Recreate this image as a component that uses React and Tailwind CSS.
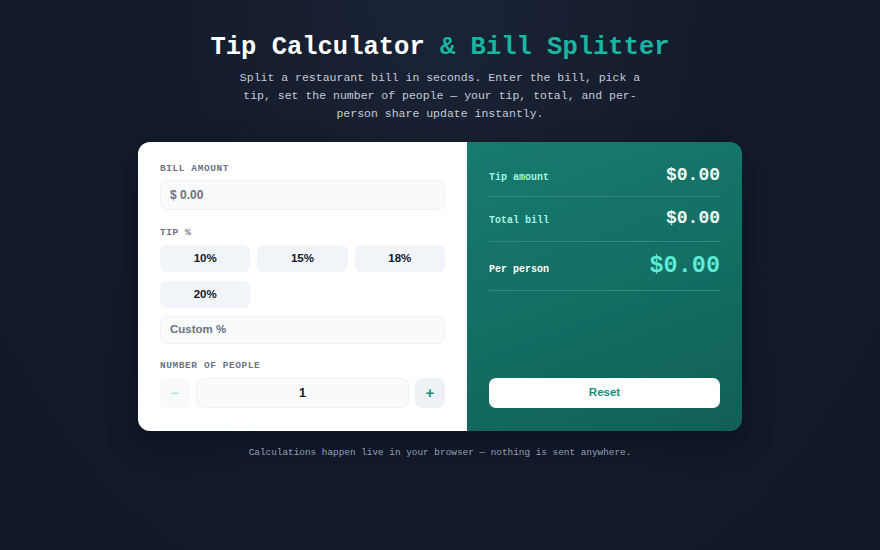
import React from "react";

export default function App() {
  return (
    <div
      className="min-h-[550px] w-full flex flex-col items-center bg-[radial-gradient(ellipse_at_top,_#1b2436_0%,_#131b2c_45%,_#0f1729_100%)] font-['Liberation_Mono',monospace]"
    >
      <h1 className="mt-[33px] text-[25.5px] leading-[30px] font-bold text-white tracking-[0px]">
        Tip Calculator <span className="text-[#19b5a0]">&amp; Bill Splitter</span>
      </h1>
      <p className="mt-[6px] max-w-[410px] text-center text-[11.5px] leading-[18px] text-[#c3cad6]">
        Split a restaurant bill in seconds. Enter the bill, pick a tip, set the number of people — your tip, total, and per-person share update instantly.
      </p>

      <div className="mt-[19px] w-[604px] h-[289px] grid grid-cols-[329px_1fr] rounded-[12px] overflow-hidden shadow-[0_10px_30px_rgba(0,0,0,0.35)]">
        {/* Left */}
        <div className="bg-white px-[22px] pt-[21px] font-['Liberation_Sans',Arial,sans-serif]">
          <div className="text-[9.5px] leading-[12px] font-bold tracking-[0.06em] text-[#6b7385] font-['Liberation_Mono',monospace]">BILL AMOUNT</div>
          <div className="mt-[5px] h-[30px] rounded-[8px] border border-[#eef1f5] bg-[#f8fafc] flex items-center px-[9px] text-[12px] font-bold text-[#6b7280]">
            $ 0.00
          </div>
          <div className="mt-[17px] text-[9.5px] leading-[12px] font-bold tracking-[0.06em] text-[#6b7385] font-['Liberation_Mono',monospace]">TIP %</div>
          <div className="mt-[6px] grid grid-cols-3 gap-x-[7px] gap-y-[9px]">
            {["10%", "15%", "18%", "20%"].map((t) => (
              <div key={t} className="h-[27px] rounded-[7px] bg-[#f1f4f8] flex items-center justify-center text-[11.5px] font-bold text-[#111827]">
                {t}
              </div>
            ))}
          </div>
          <div className="mt-[8px] h-[28px] rounded-[8px] border border-[#eef1f5] bg-[#f8fafc] flex items-center px-[9px] text-[11.5px] font-bold text-[#6b7280]">
            Custom %
          </div>
          <div className="mt-[16px] text-[9.5px] leading-[12px] font-bold tracking-[0.06em] text-[#6b7385] font-['Liberation_Mono',monospace]">NUMBER OF PEOPLE</div>
          <div className="mt-[6px] flex gap-[6px] h-[30px]">
            <div className="w-[30px] rounded-[7px] bg-[#f8fafc] flex items-center justify-center text-[15px] text-[#9ad9cc]">−</div>
            <div className="flex-1 rounded-[8px] border border-[#eef1f5] bg-[#f8fafc] flex items-center justify-center text-[12.5px] font-bold text-[#111827]">1</div>
            <div className="w-[30px] rounded-[7px] bg-[#eef2f6] flex items-center justify-center text-[15px] font-bold text-[#0f8f7d]">+</div>
          </div>
        </div>

        {/* Right */}
        <div className="bg-[linear-gradient(160deg,_#177b6f_0%,_#136d63_55%,_#115f57_100%)] px-[22px] pt-[19px] pb-[23px] flex flex-col">
          <div className="h-[36px] pb-[6px] flex items-center justify-between border-b border-[#2f8a7f]">
            <span className="mt-[4px] text-[10px] font-bold text-[#a7f3e4]">Tip amount</span>
            <span className="text-[18px] font-bold text-[#eefcf8]">$0.00</span>
          </div>
          <div className="h-[45px] pb-[2px] flex items-center justify-between border-b border-[#2f8a7f]">
            <span className="mt-[4px] text-[10px] font-bold text-[#a7f3e4]">Total bill</span>
            <span className="text-[18px] font-bold text-[#eefcf8]">$0.00</span>
          </div>
          <div className="h-[49px] flex items-center justify-between border-b border-[#2f8a7f]">
            <span className="mt-[7px] text-[10px] font-bold text-white">Per person</span>
            <span className="text-[23.5px] font-bold text-[#5eead4]">$0.00</span>
          </div>
          <div className="flex-1" />
          <div className="h-[30px] rounded-[7px] bg-white flex items-center justify-center text-[11.5px] font-bold text-[#13907e] font-['Liberation_Sans',Arial,sans-serif]">
            Reset
          </div>
        </div>
      </div>

      <p className="mt-[16px] text-[9.4px] leading-[12px] text-[#94a0b4]">
        Calculations happen live in your browser — nothing is sent anywhere.
      </p>
    </div>
  );
}
